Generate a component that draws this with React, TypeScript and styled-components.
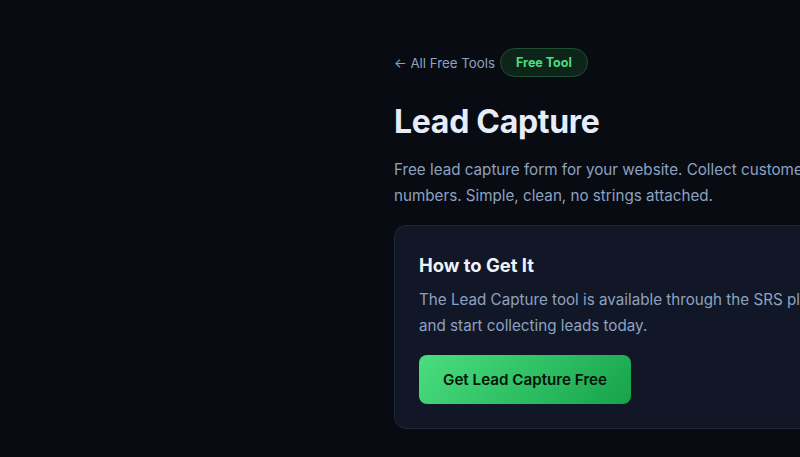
import React from 'react';
import styled, { createGlobalStyle } from 'styled-components';

const GlobalStyle = createGlobalStyle`
  html, body {
    margin: 0;
    padding: 0;
    background: #080b12;
    overflow: hidden;
  }
  body {
    font-family: Inter, "Noto Sans", "Liberation Sans", sans-serif;
    -webkit-font-smoothing: antialiased;
  }
`;

const App: React.FC = () => {
  return (
    <>
      <GlobalStyle />
      <Page>
        <Content>
          <Breadcrumbs>
            <BackLink href="#">← All Free Tools</BackLink>
            <Badge>Free Tool</Badge>
          </Breadcrumbs>
          <Title>Lead Capture</Title>
          <Lead>
            Free lead capture form for your website. Collect customer names, emails, and phone
            <br />
            numbers. Simple, clean, no strings attached.
          </Lead>
          <Card>
            <CardTitle>How to Get It</CardTitle>
            <CardText>
              The Lead Capture tool is available through the SRS platform. Sign up for free
              <br />
              and start collecting leads today.
            </CardText>
            <CtaButton>Get Lead Capture Free</CtaButton>
          </Card>
        </Content>
      </Page>
    </>
  );
};

export default App;

const Page = styled.main`
  min-height: 457px;
  padding: 48px 0 0 394px;
  box-sizing: border-box;
  overflow: hidden;
`;

const Content = styled.div`
  width: 760px;
  display: flex;
  flex-direction: column;
  align-items: flex-start;
`;

const Breadcrumbs = styled.div`
  display: flex;
  align-items: center;
  gap: 5px;
`;

const BackLink = styled.a`
  color: #8da2c0;
  font-size: 13.3px;
  text-decoration: none;
`;

const Badge = styled.span`
  display: inline-flex;
  align-items: center;
  height: 29px;
  padding: 0 15px;
  box-sizing: border-box;
  border-radius: 999px;
  background: #0e2419;
  border: 1px solid #1f5033;
  color: #4ade80;
  font-size: 12.5px;
  font-weight: 700;
`;

const Title = styled.h1`
  margin: 26px 0 0;
  color: #e6edf8;
  font-size: 32px;
  line-height: 38px;
  font-weight: 700;
  letter-spacing: -0.3px;
`;

const Lead = styled.p`
  margin: 16px 0 0;
  color: #8da2c0;
  font-size: 15.2px;
  line-height: 26px;
  white-space: nowrap;
`;

const Card = styled.section`
  margin-top: 16px;
  width: 100%;
  box-sizing: border-box;
  padding: 25px 24px 24px;
  background: #111726;
  border: 1px solid #1e2738;
  border-radius: 12px;
  display: flex;
  flex-direction: column;
  align-items: flex-start;
`;

const CardTitle = styled.h2`
  margin: 0;
  color: #eef3fb;
  font-size: 18.4px;
  line-height: 28px;
  font-weight: 700;
`;

const CardText = styled.p`
  margin: 8px 0 0;
  color: #8da2c0;
  font-size: 15.2px;
  line-height: 26px;
  white-space: nowrap;
`;

const CtaButton = styled.button`
  margin-top: 16px;
  padding: 0 24px;
  height: 49px;
  border: none;
  border-radius: 8px;
  background: linear-gradient(135deg, #4ade80 0%, #16a34a 100%);
  color: #05140a;
  font-family: inherit;
  font-size: 15.2px;
  font-weight: 600;
  cursor: pointer;
`;
